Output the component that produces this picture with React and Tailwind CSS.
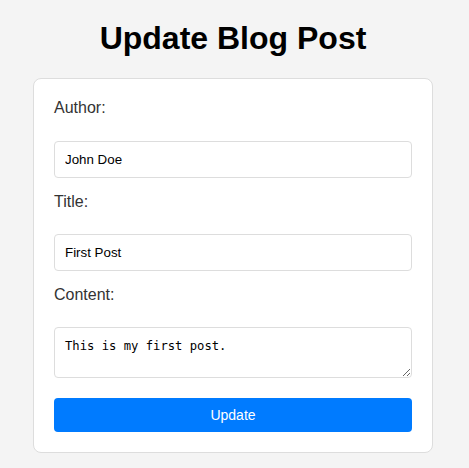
import { useState } from 'react';

function App() {
  const [post, setPost] = useState({
    author: 'John Doe',
    title: 'First Post',
    content: 'This is my first post.',
  });

  const handleSubmit = (e) => {
    e.preventDefault();
  };

  return (
    <div className="min-h-screen bg-[#f4f4f4] font-['Liberation_Sans',Arial,sans-serif]">
      <div className="w-[466px] pt-[20px] pb-[20px]">
        <h1 className="text-[32px] leading-[37px] font-bold text-center text-black mb-[21px]">Update Blog Post</h1>
        <form onSubmit={handleSubmit}
          className="mx-auto w-[400px] bg-white border border-[#ddd] rounded-[8px] p-[20px]">
          <label className="block text-[16px] leading-[18px] text-[#333] mb-[24px]">Author:</label>
          <input type="text" value={post.author}
            onChange={(e) => setPost({ ...post, author: e.target.value })}
            className="block w-full h-[37px] px-[10px] text-[13.33px] text-black border border-[#ddd] rounded-[4px] mb-[15px] outline-none" />

          <label className="block text-[16px] leading-[18px] text-[#333] mb-[23px]">Title:</label>
          <input type="text" value={post.title}
            onChange={(e) => setPost({ ...post, title: e.target.value })}
            className="block w-full h-[37px] px-[10px] text-[13.33px] text-black border border-[#ddd] rounded-[4px] mb-[15px] outline-none" />

          <label className="block text-[16px] leading-[18px] text-[#333] mb-[23px]">Content:</label>
          <textarea value={post.content}
            onChange={(e) => setPost({ ...post, content: e.target.value })}
            className="block w-full h-[51px] px-[10px] py-[11px] text-[12.2px] leading-[15px] text-black font-['DejaVu_Sans_Mono',monospace] border border-[#ddd] rounded-[4px] mb-[20px] outline-none" />

          <button type="submit"
            className="block w-full h-[34px] bg-[#007bff] text-white text-[14px] rounded-[4px]">Update</button>
        </form>
      </div>
    </div>
  );
}

export default App;
